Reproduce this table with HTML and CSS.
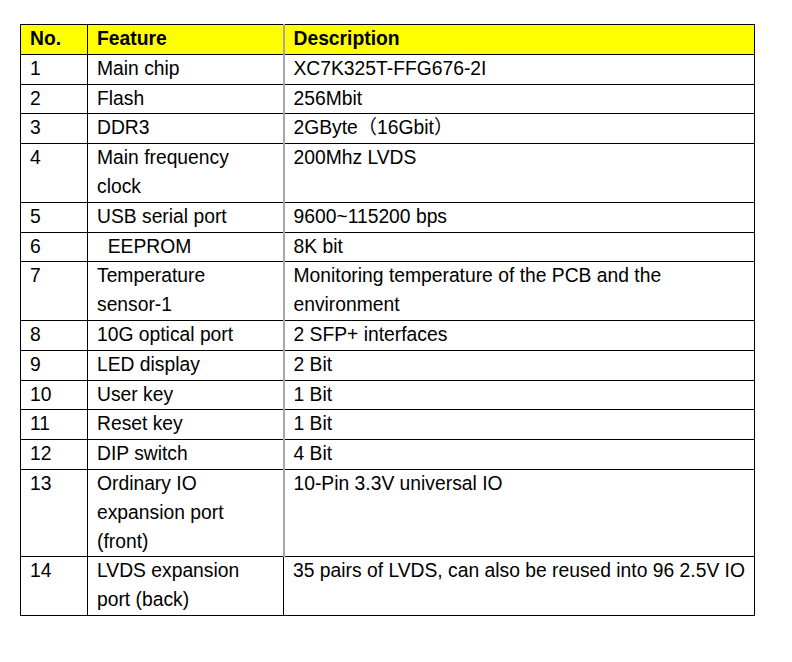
FILE: index.html
```html
<!DOCTYPE html>
<html>
<head>
<meta charset="utf-8">
<link rel="stylesheet" href="styles.css">
</head>
<body>
<div class="page">
<table class="spec">
<colgroup><col class="c-no"><col class="c-feat"><col class="c-desc"></colgroup>
<thead>
<tr><th>No.</th><th>Feature</th><th class="desc">Description</th></tr>
</thead>
<tbody>
<tr><td>1</td><td>Main chip</td><td class="desc">XC7K325T-FFG676-2I</td></tr>
<tr><td>2</td><td>Flash</td><td class="desc">256Mbit</td></tr>
<tr><td>3</td><td>DDR3</td><td class="desc">2GByte（16Gbit）</td></tr>
<tr><td>4</td><td>Main frequency<br>clock</td><td class="desc">200Mhz LVDS</td></tr>
<tr><td>5</td><td>USB serial port</td><td class="desc">9600~115200 bps</td></tr>
<tr><td>6</td><td>&nbsp;&nbsp;EEPROM</td><td class="desc">8K bit</td></tr>
<tr><td>7</td><td>Temperature<br>sensor-1</td><td class="desc">Monitoring temperature of the PCB and the<br>environment</td></tr>
<tr><td>8</td><td>10G optical port</td><td class="desc">2 SFP+ interfaces</td></tr>
<tr><td>9</td><td>LED display</td><td class="desc">2 Bit</td></tr>
<tr><td>10</td><td>User key</td><td class="desc">1 Bit</td></tr>
<tr><td>11</td><td>Reset key</td><td class="desc">1 Bit</td></tr>
<tr><td>12</td><td>DIP switch</td><td class="desc">4 Bit</td></tr>
<tr><td>13</td><td>Ordinary IO<br>expansion port<br>(front)</td><td class="desc">10-Pin 3.3V universal IO</td></tr>
<tr class="last"><td>14</td><td>LVDS expansion<br>port (back)</td><td class="desc">35 pairs of LVDS, can also be reused into 96 2.5V IO</td></tr>
</tbody>
</table>
</div>
</body>
</html>
```
FILE: styles.css
```css
html, body {
  margin: 0;
  padding: 0;
  background: #ffffff;
}
.page {
  padding: 24px 0 0 20px;
}
.spec {
  border-collapse: collapse;
  table-layout: fixed;
  width: 735px;
  font-family: "Liberation Sans", Arial, "Noto Sans CJK SC", sans-serif;
  font-size: 19.3px;
  line-height: 28.8px;
  color: #000;
}
.c-no { width: 67px; }
.c-feat { width: 196px; }
.spec th, .spec td {
  border: 1px solid #000;
  padding: 0 4px 0 9px;
  vertical-align: top;
  text-align: left;
  white-space: nowrap;
}
.spec th {
  background: #ffff00;
  font-weight: bold;
}
.spec .desc {
  border-left: 2px solid #a6a6a6;
}
.spec tr.last .desc {
  border-left: 1px solid #000;
}
```
